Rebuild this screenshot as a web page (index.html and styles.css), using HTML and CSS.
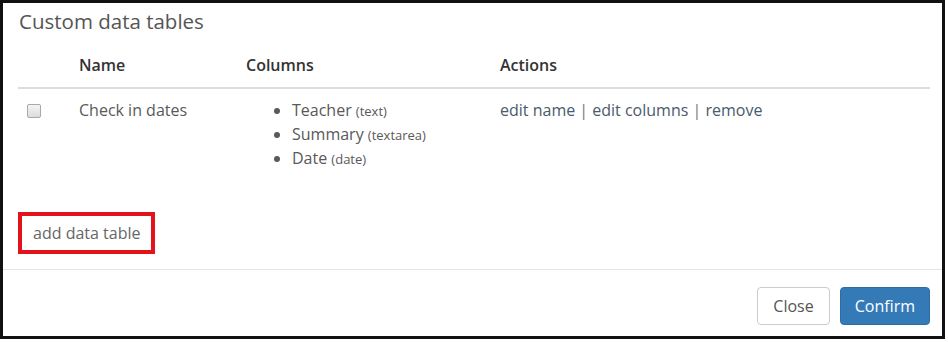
FILE: index.html
```html
<!DOCTYPE html>
<html lang="en">
<head>
    <meta charset="UTF-8">
    <title>Custom data tables</title>
    <link rel="stylesheet" href="styles.css">
</head>
<body>

    <div class="modal">
        <h4 class="modal-title">Custom data tables</h4>

        <div class="modal-body">
            <table class="data-tables">
                <thead>
                    <tr>
                        <th class="col-check"></th>
                        <th class="col-name">Name</th>
                        <th class="col-columns">Columns</th>
                        <th>Actions</th>
                    </tr>
                </thead>
                <tbody>
                    <tr>
                        <td class="col-check"><input type="checkbox" class="row-check"></td>
                        <td>Check in dates</td>
                        <td>
                            <ul class="column-list">
                                <li>Teacher <small>(text)</small></li>
                                <li>Summary <small>(textarea)</small></li>
                                <li>Date <small>(date)</small></li>
                            </ul>
                        </td>
                        <td class="actions">
                            <a href="#">edit name</a> <span class="sep">|</span>
                            <a href="#">edit columns</a> <span class="sep">|</span>
                            <a href="#">remove</a>
                        </td>
                    </tr>
                </tbody>
            </table>

            <div class="add-row">
                <a href="#" class="add-link">add data table</a>
            </div>
        </div>

        <div class="modal-footer">
            <button class="btn btn-default">Close</button>
            <button class="btn btn-primary">Confirm</button>
        </div>
    </div>

</body>
</html>
```

FILE: styles.css
```css
body {
    margin: 0;
    background-color: #ffffff;
    font-family: 'Open Sans', 'Noto Sans', sans-serif;
    font-size: 16px;
    line-height: 23px;
    color: #595959;
}
.modal {
    box-sizing: border-box;
    width: 945px;
    height: 339px;
    border: 3px solid #111;
    display: flex;
    flex-direction: column;
}
.modal-title {
    margin: 0;
    padding: 7px 16px 0;
    font-size: 20.5px;
    line-height: 23px;
    font-weight: 400;
    color: #555;
}
.modal-body {
    flex: 1;
    padding: 11px 12px 0 15px;
}
.data-tables {
    width: 100%;
    border-collapse: collapse;
}
.data-tables th {
    text-align: left;
    padding: 10px 8px;
    font-weight: 600;
    color: #333;
    border-bottom: 2px solid #ddd;
}
.data-tables td {
    vertical-align: top;
    padding: 10px 8px 7px;
}
.col-check {
    width: 36px;
}
.col-name {
    width: 151px;
}
.col-columns {
    width: 238px;
}
.data-tables td.col-check {
    padding-left: 9px;
}
.row-check {
    appearance: none;
    box-sizing: border-box;
    width: 14px;
    height: 14px;
    margin: 5px 0 0;
    border: 1px solid #a9a9a9;
    border-radius: 2px;
    background: linear-gradient(#f4f4f4, #dcdcdc);
    display: block;
}
.column-list {
    margin: 0;
    padding-left: 46px;
}
.column-list small {
    font-size: 13px;
}
.actions a {
    color: #4a5a6a;
    text-decoration: none;
}
.actions .sep {
    color: #777;
}
.add-row {
    margin-top: 34px;
}
.add-link {
    display: inline-block;
    padding: 4px 11px 4px 11px;
    line-height: 26px;
    border: 4px solid #e3131b;
    color: #666;
    text-decoration: none;
}
.modal-footer {
    display: flex;
    justify-content: flex-end;
    gap: 10px;
    padding: 17px 12px 11px;
    border-top: 1px solid #e5e5e5;
}
.btn {
    font-family: inherit;
    font-size: 16px;
    line-height: 20px;
    padding: 8px 15px;
    border-radius: 4px;
    border: 1px solid #ccc;
    cursor: pointer;
}
.btn-default {
    background-color: #fff;
    color: #555;
}
.btn-primary {
    background-color: #337ab7;
    border-color: #2e6da4;
    color: #fff;
    padding: 8px 14px;
}
```
